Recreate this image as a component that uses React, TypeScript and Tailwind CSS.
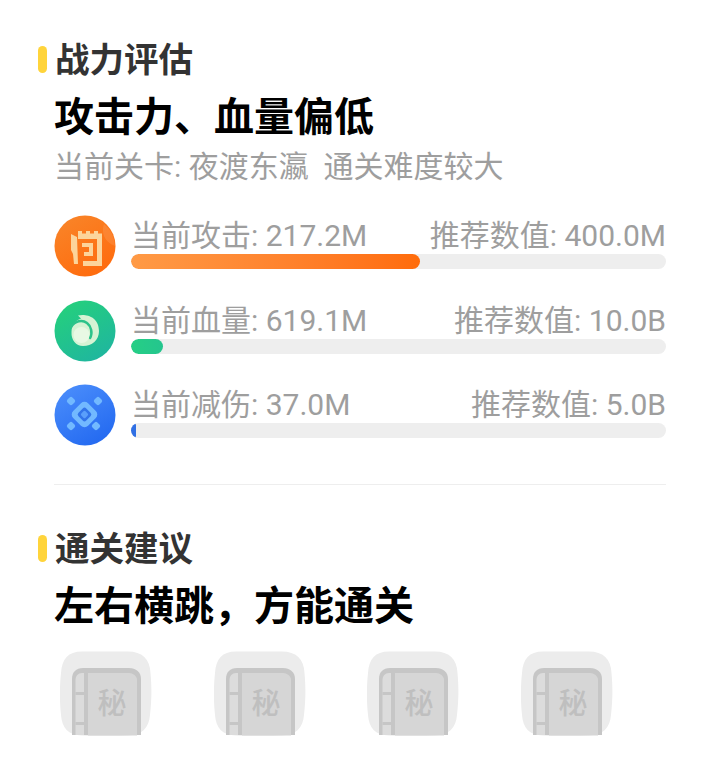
const fontStack = "font-['Roboto','Noto_Sans_CJK_SC',sans-serif]";

type Stat = {
  label: string;
  recommend: string;
  percent: number;
  barClass: string;
  icon: React.ReactNode;
};

const AttackIcon = () => (
  <svg viewBox="0 0 62 62" className="h-[62px] w-[62px]" aria-hidden="true">
    <defs>
      <linearGradient id="atk" x1="0.2" y1="0" x2="0.8" y2="1">
        <stop offset="0" stopColor="#f98428" />
        <stop offset="1" stopColor="#ff6a0c" />
      </linearGradient>
    </defs>
    <circle cx="31" cy="31" r="30.5" fill="url(#atk)" />
    <path d="M50 9A30.5 30.5 0 0 1 61 31C50 27 47 17 50 9z" fill="#ffffff" opacity="0.1" />
    <path d="M17 19l6 3 1 27h-4l-1-10-2-4z" fill="#fcd49a" />
    <path d="M24 20v-4h4v2.5h4V16h4v2.5h4V16h4v2.5h4V51H29v-5h14V24H24z" fill="#fcd49a" />
    <path d="M28 28h11v13h-9v-4h5v-5h-7z" fill="#fcd49a" />
  </svg>
);

const HealthIcon = () => (
  <svg viewBox="0 0 62 62" className="h-[62px] w-[62px]" aria-hidden="true">
    <defs>
      <linearGradient id="hp" x1="0.2" y1="0" x2="0.8" y2="1">
        <stop offset="0" stopColor="#25d07c" />
        <stop offset="1" stopColor="#1fb5a0" />
      </linearGradient>
    </defs>
    <circle cx="31" cy="31" r="30.5" fill="url(#hp)" />
    <path
      d="M17.5 32C17.5 24 23 20 27 18.5L24 15.5C31 13.5 45 16 45 31C45 40 38 46 29 46C22 46 17 40 17.5 32z"
      fill="#d6f3d4"
    />
    <path d="M17 27C21 21 28 19 33 23C37 26 39 33 36 38" fill="none" stroke="#2cc38a" strokeWidth="2.5" strokeLinecap="round" />
    <circle cx="27.5" cy="35" r="8" fill="#e8f9e4" />
  </svg>
);

const ShieldIcon = () => (
  <svg viewBox="0 0 62 62" className="h-[62px] w-[62px]" aria-hidden="true">
    <defs>
      <linearGradient id="def" x1="0.2" y1="0" x2="0.8" y2="1">
        <stop offset="0" stopColor="#4a8dfb" />
        <stop offset="1" stopColor="#2268f0" />
      </linearGradient>
    </defs>
    <circle cx="31" cy="31" r="30.5" fill="url(#def)" />
    <g fill="#72b9ff">
      <rect x="13.5" y="13.5" width="7" height="7" rx="2" transform="rotate(45 17 17)" />
      <rect x="40.5" y="13.5" width="7" height="7" rx="2" transform="rotate(45 44 17)" />
      <rect x="13.5" y="38.5" width="7" height="7" rx="2" transform="rotate(45 17 42)" />
      <rect x="38.5" y="38.5" width="7" height="7" rx="2" transform="rotate(45 42 42)" />
    </g>
    <rect x="20" y="20" width="21" height="21" rx="5" transform="rotate(45 30.5 30.5)" fill="#72b9ff" />
    <rect x="25" y="25" width="11" height="11" rx="2.5" transform="rotate(45 30.5 30.5)" fill="#3274ea" />
    <rect x="27.5" y="27.5" width="6" height="6" rx="1.5" transform="rotate(45 30.5 30.5)" fill="#5a9ffb" />
  </svg>
);

const stats: Stat[] = [
  {
    label: '当前攻击: 217.2M',
    recommend: '推荐数值: 400.0M',
    percent: 54,
    barClass: 'bg-gradient-to-r from-[#ff9a45] to-[#ff6c0a]',
    icon: <AttackIcon />
  },
  {
    label: '当前血量: 619.1M',
    recommend: '推荐数值: 10.0B',
    percent: 6,
    barClass: 'bg-gradient-to-r from-[#25cf85] to-[#25c58e]',
    icon: <HealthIcon />
  },
  {
    label: '当前减伤: 37.0M',
    recommend: '推荐数值: 5.0B',
    percent: 1,
    barClass: 'bg-[#2f6fe4]',
    icon: <ShieldIcon />
  }
];

const SectionTitle = ({ title }: { title: string }) => (
  <div className="flex h-[40px] items-center">
    <span className="-mt-[2px] h-[27px] w-[9px] rounded-full bg-[#ffd43b]" />
    <span className="ml-[8px] text-[34.5px] leading-[40px] font-bold text-[#333333]">{title}</span>
  </div>
);

const StatRow = ({ stat }: { stat: Stat }) => (
  <div className="flex h-[62px] items-start">
    {stat.icon}
    <div className="ml-[15px] flex-1">
      <div className="flex h-[39px] items-center justify-between pt-[3px] text-[30px] leading-[36px] text-[#9e9e9e]">
        <span>{stat.label}</span>
        <span>{stat.recommend}</span>
      </div>
      <div className="h-[15px] overflow-hidden rounded-full bg-[#eeeeee]">
        <div className={`h-full rounded-full ${stat.barClass}`} style={{ width: `${stat.percent}%` }} />
      </div>
    </div>
  </div>
);

const SecretBook = () => (
  <svg viewBox="0 0 92 85" className="h-[85px] w-[92px]" aria-hidden="true">
    <path
      d="M22 0.5H68C82 0.5 90 8 90.5 22C92 38 91.5 50 90 64C89 77 82 84 68 84.5C52 85.5 38 85.5 22 84.5C8 84 2 77 1 64C-0.5 50 -0.5 36 1 22C2 8 8 0.5 22 0.5z"
      fill="#ececec"
    />
    <path d="M12 84V28C12 21 16 17 23 17H69C76 17 81 21 81 28V84z" fill="#c6c6c6" />
    <path d="M28 22H69C73 22 77 25 77 29V84.5H28z" fill="#d6d6d6" />
    <path d="M15.5 84V29C15.5 25 18 22 22 22H24V84z" fill="#dcdcdc" />
    <rect x="15.5" y="41" width="9" height="3" fill="#c6c6c6" />
    <rect x="15.5" y="71" width="9" height="3" fill="#c6c6c6" />
    <text
      x="52"
      y="63"
      textAnchor="middle"
      fontFamily="'Noto Sans CJK SC', sans-serif"
      fontSize="29"
      fontWeight="500"
      fill="#bfbfbf"
    >
      秘
    </text>
  </svg>
);

export default function App() {
  return (
    <div className={`${fontStack} min-h-[774px] w-[720px] bg-white pt-[40px] pr-[54px] pl-[38px]`}>
      <SectionTitle title="战力评估" />
      <div className="pl-[16px]">
        <h2 className="mt-[13px] text-[40px] leading-[50px] font-bold text-black">攻击力、血量偏低</h2>
        <p className="mt-[3px] whitespace-pre text-[30px] leading-[42px] text-[#9e9e9e]">当前关卡: 夜渡东瀛  通关难度较大</p>
        <div className="mt-[27px] flex flex-col gap-[22.5px]">
          {stats.map((stat) => (
            <StatRow key={stat.label} stat={stat} />
          ))}
        </div>
        <div className="mt-[38px] h-px bg-[#eeeeee]" />
      </div>
      <div className="mt-[44px]">
        <SectionTitle title="通关建议" />
      </div>
      <div className="pl-[16px]">
        <h2 className="mt-[13px] text-[40px] leading-[50px] font-bold text-black">左右横跳，方能通关</h2>
        <div className="mt-[19px] flex gap-[61.5px] pl-[6px]">
          {[0, 1, 2, 3].map((item) => (
            <SecretBook key={item} />
          ))}
        </div>
      </div>
    </div>
  );
}
